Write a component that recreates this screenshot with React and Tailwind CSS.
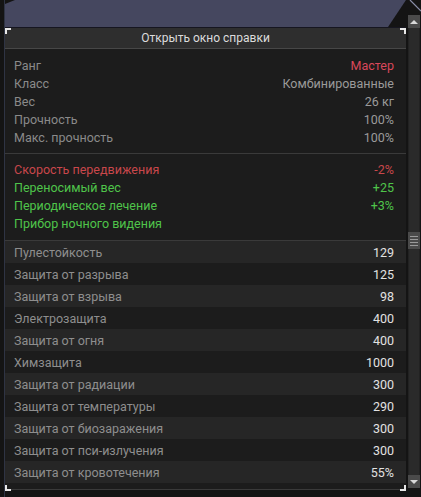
import React from "react";

const top = [
  ["Ранг", "Мастер", "text-[#d9475a]"],
  ["Класс", "Комбинированные", "text-[#9a9a9a]"],
  ["Вес", "26 кг", "text-[#9a9a9a]"],
  ["Прочность", "100%", "text-[#9a9a9a]"],
  ["Макс. прочность", "100%", "text-[#9a9a9a]"],
];

const effects = [
  ["Скорость передвижения", "-2%", "text-[#c9474b]"],
  ["Переносимый вес", "+25", "text-[#4fc44a]"],
  ["Периодическое лечение", "+3%", "text-[#4fc44a]"],
  ["Прибор ночного видения", "", "text-[#4fc44a]"],
];

const stats = [
  ["Пулестойкость", "129"],
  ["Защита от разрыва", "125"],
  ["Защита от взрыва", "98"],
  ["Электрозащита", "400"],
  ["Защита от огня", "400"],
  ["Химзащита", "1000"],
  ["Защита от радиации", "300"],
  ["Защита от температуры", "290"],
  ["Защита от биозаражения", "300"],
  ["Защита от пси-излучения", "300"],
  ["Защита от кровотечения", "55%"],
];

function Corner({ className }) {
  return <div className={"absolute w-[6px] h-[6px] border-[#e8e8e8] " + className} />;
}

export default function App() {
  return (
    <div
      className="w-[421px] h-[497px] bg-[#141414] overflow-hidden flex text-[12.5px] leading-none"
      style={{ fontFamily: "Roboto, 'Liberation Sans', sans-serif" }}
    >
      <div className="w-[5px] shrink-0 flex justify-end">
        <div className="w-px h-full bg-[#2f3444]" />
      </div>
      <div className="w-[401px] shrink-0 flex flex-col">
        <div className="h-[27px] bg-[#45475f] [clip-path:polygon(10px_0,100%_0,383px_100%,0_100%,0_4px)]" />
        <div className="h-px bg-[#161620]" />
        <div className="relative flex flex-col">
          <Corner className="left-0 top-0 border-l-2 border-t-2" />
          <Corner className="right-0 top-0 border-r-2 border-t-2" />
          <Corner className="left-0 bottom-[-1px] border-l-2 border-b-2" />
          <Corner className="right-0 bottom-[-1px] border-r-2 border-b-2" />
          <div className="h-[21px] bg-[#2e2e2e] border-b border-[#474747] flex items-center justify-center text-[#dcdcdc] text-[12px]">
            Открыть окно справки
          </div>
          <div className="bg-[#1c1c1c] flex flex-col border-b border-[#3a3a3a] pb-[6px]">
            <div className="pt-[8px] pb-[6px] flex flex-col">
              {top.map(([l, v, c]) => (
                <div key={l} className="h-[18px] flex items-center justify-between pl-[9px] pr-[12px]">
                  <span className="text-[#8a8a8a]">{l}</span>
                  <span className={c}>{v}</span>
                </div>
              ))}
            </div>
            <div className="h-px bg-[#3a3a3a]" />
            <div className="pt-[7px] pb-[7px] flex flex-col">
              {effects.map(([l, v, c]) => (
                <div key={l} className={"h-[18px] flex items-center justify-between pl-[9px] pr-[12px] " + c}>
                  <span>{l}</span>
                  <span>{v}</span>
                </div>
              ))}
            </div>
            <div className="h-px bg-[#3a3a3a]" />
            <div className="flex flex-col">
              {stats.map(([l, v], i) => (
                <div
                  key={l}
                  className={
                    "h-[22px] pt-[2px] flex items-center justify-between pl-[9px] pr-[12px] " +
                    (i % 2 === 0 ? "bg-[#262626]" : "bg-[#1c1c1c]")
                  }
                >
                  <span className="text-[#8e8e8e]">{l}</span>
                  <span className="text-[#e2e2e2]">{v}</span>
                </div>
              ))}
            </div>
          </div>
        </div>
      </div>
      <div className="w-[2px] shrink-0" />
      <div className="w-[13px] shrink-0 flex flex-col">
        <div className="h-[15px] relative">
          <svg width="13" height="15" className="absolute left-0 top-0">
            <line x1="2" y1="0" x2="13" y2="11" stroke="#8a8fa8" strokeWidth="1.2" />
          </svg>
        </div>
        <div className="h-[13px] w-[12px] bg-[#4a4a4a] flex items-center justify-center">
          <div className="w-0 h-0 border-l-[4px] border-r-[4px] border-b-[4px] border-l-transparent border-r-transparent border-b-[#d8d8d8]" />
        </div>
        <div className="w-[12px] h-[204px] bg-[#2a2a2a] border-x border-[#222]" />
        <div className="w-[12px] h-[17px] bg-[#4a4a4a] flex flex-col items-center justify-center gap-[2px]">
          <div className="w-[8px] h-px bg-[#9a9a9a]" />
          <div className="w-[8px] h-px bg-[#9a9a9a]" />
          <div className="w-[8px] h-px bg-[#9a9a9a]" />
          <div className="w-[8px] h-px bg-[#9a9a9a]" />
        </div>
        <div className="w-[12px] h-[226px] bg-[#2a2a2a] border-x border-[#222]" />
        <div className="h-[13px] w-[12px] bg-[#4a4a4a] flex items-center justify-center">
          <div className="w-0 h-0 border-l-[4px] border-r-[4px] border-t-[4px] border-l-transparent border-r-transparent border-t-[#d8d8d8]" />
        </div>
      </div>
    </div>
  );
}
